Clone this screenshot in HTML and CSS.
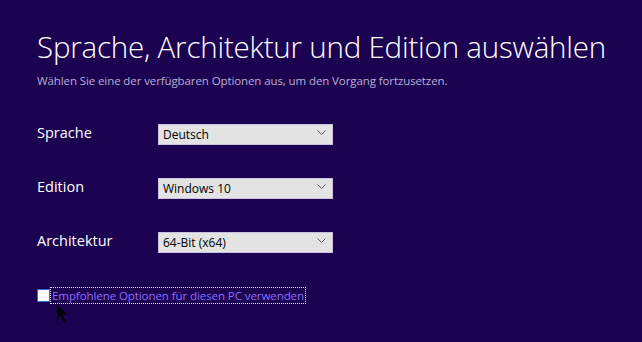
FILE: index.html
```html
<!doctype html>
<html lang="de">
<head>
  <meta charset="utf-8" />
  <title>Sprache, Architektur und Edition auswählen</title>
  <link rel="stylesheet" href="styles.css">
</head>
<body>
  <main class="page">
    <h1>Sprache, Architektur und Edition auswählen</h1>
    <p class="lead">Wählen Sie eine der verfügbaren Optionen aus, um den Vorgang fortzusetzen.</p>

    <form class="opts">
      <label class="lbl" for="lang">Sprache</label>
      <div class="pick">
        <select id="lang"><option>Deutsch</option></select>
        <svg class="chev" width="9" height="5" viewBox="0 0 9 5"><path d="M0.5 0.5 L4.5 4.5 L8.5 0.5" fill="none" stroke="#5a5a5a" stroke-width="1"/></svg>
      </div>

      <label class="lbl" for="ed">Edition</label>
      <div class="pick">
        <select id="ed"><option>Windows 10</option></select>
        <svg class="chev" width="9" height="5" viewBox="0 0 9 5"><path d="M0.5 0.5 L4.5 4.5 L8.5 0.5" fill="none" stroke="#5a5a5a" stroke-width="1"/></svg>
      </div>

      <label class="lbl" for="arch">Architektur</label>
      <div class="pick">
        <select id="arch"><option>64-Bit (x64)</option></select>
        <svg class="chev" width="9" height="5" viewBox="0 0 9 5"><path d="M0.5 0.5 L4.5 4.5 L8.5 0.5" fill="none" stroke="#5a5a5a" stroke-width="1"/></svg>
      </div>
    </form>

    <div class="rec">
      <span class="box"></span>
      <span class="rec-text">Empfohlene Optionen für diesen PC verwenden</span>
      <!-- mouse pointer resting over the checkbox -->
      <svg class="cursor" width="12" height="19" viewBox="0 0 12 19"><path d="M1 1 L1 15 L4.5 11.5 L7.5 18 L9.5 17 L6.5 10.5 L11 10.5 Z" fill="#000"/></svg>
    </div>
  </main>
</body>
</html>
```

FILE: styles.css
```css
*,*::before,*::after{box-sizing:border-box}
html,body{height:100%}
body{margin:0;background:#1c0352;color:#fff;font-family:"Open Sans","Noto Sans",sans-serif;overflow:hidden}
.page{padding:28px 0 0 37px}
h1{margin:0;font-weight:300;font-size:29.5px;line-height:38px;letter-spacing:-.2px;color:#fff}
.lead{margin:7px 0 0;font-size:11.5px;line-height:15px;color:#b8b0d2;letter-spacing:-.1px}
.opts{display:grid;grid-template-columns:121px 175px;grid-auto-rows:21px;row-gap:33px;align-items:center;margin-top:34px}
.lbl{font-size:14.5px;color:#fff;line-height:21px}
.pick{position:relative;height:21px}
select{appearance:none;-webkit-appearance:none;width:100%;height:21px;margin:0;border:1px solid #c9c2de;border-radius:0;background:#e3e3e3;color:#000;font-family:"Open Sans","Noto Sans",sans-serif;font-size:12px;padding:0 0 0 4px;outline:none}
.chev{position:absolute;right:7px;top:8px;pointer-events:none}
.rec{position:relative;display:flex;align-items:center;margin-top:36px;height:17px}
.box{width:13px;height:13px;border:1px solid #2a6fd0;background:#fff;flex:none}
.rec-text{margin-left:1px;padding:0 1px;font-size:11.55px;line-height:15px;color:#8b6cff;outline:1px dotted #e8e4ff;outline-offset:0;letter-spacing:-.1px}
.cursor{position:absolute;left:19px;top:17px}
```
